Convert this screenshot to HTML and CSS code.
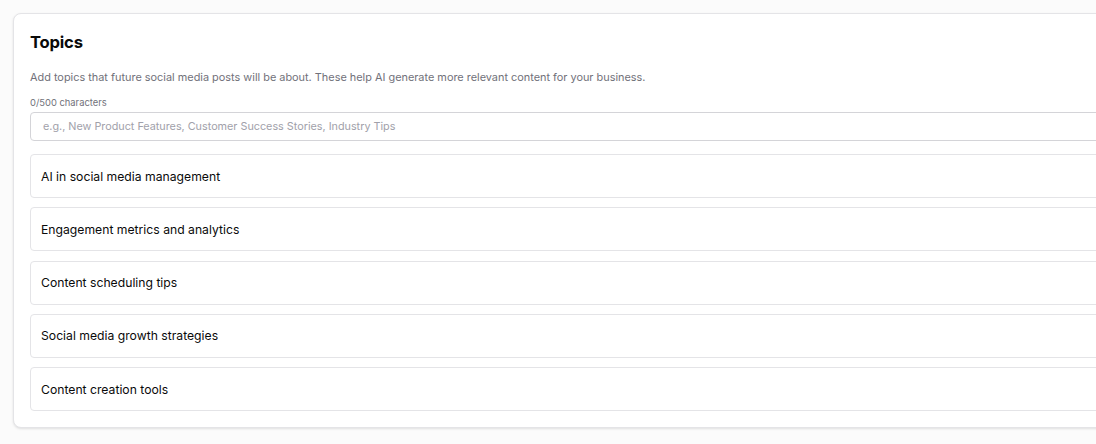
FILE: index.html
```html
<!DOCTYPE html>
<html lang="en">
<head>
  <meta charset="UTF-8" />
  <meta name="viewport" content="width=device-width, initial-scale=1.0" />
  <title>Topics</title>
  <link rel="stylesheet" href="styles.css">
</head>
<body>
  <section class="card">
    <h2 class="card-title">Topics</h2>
    <p class="card-desc">Add topics that future social media posts will be about. These help AI generate more relevant content for your business.</p>

    <div class="char-count">0/500 characters</div>
    <input type="text" class="topic-input" placeholder="e.g., New Product Features, Customer Success Stories, Industry Tips" />

    <!-- saved topics -->
    <ul class="topic-list">
      <li class="topic-item">AI in social media management</li>
      <li class="topic-item">Engagement metrics and analytics</li>
      <li class="topic-item">Content scheduling tips</li>
      <li class="topic-item">Social media growth strategies</li>
      <li class="topic-item">Content creation tools</li>
    </ul>
  </section>
</body>
</html>
```

FILE: styles.css
```css
html, body {
  margin: 0;
  padding: 0;
  overflow: hidden;
  height: 100vh;
}
body {
  font-family: Inter, "Noto Sans", Arial, sans-serif;
  background-color: #fbfbfb;
  color: #0a0a0a;
  padding: 13px 0 0 13px;
  box-sizing: border-box;
}

.card {
  width: 1200px;
  background-color: #fff;
  border: 1px solid #e4e4e7;
  border-radius: 8px;
  box-shadow: 0 1px 3px rgba(0, 0, 0, 0.08), 0 1px 2px rgba(0, 0, 0, 0.04);
  padding: 16px;
  box-sizing: border-box;
}

.card-title {
  margin: 0;
  font-size: 16.6px;
  font-weight: 700;
  line-height: 24px;
  letter-spacing: -0.2px;
}
.card-desc {
  margin: 15px 0 0;
  font-size: 10.9px;
  line-height: 16px;
  color: #71717a;
}

.char-count {
  margin-top: 12px;
  font-size: 9.4px;
  line-height: 12px;
  color: #71717a;
}
.topic-input {
  display: block;
  width: 100%;
  height: 29px;
  margin-top: 3px;
  padding: 0 12px;
  border: 1px solid #d4d4d8;
  border-radius: 4px;
  font-family: inherit;
  font-size: 10.8px;
  color: #0a0a0a;
  box-sizing: border-box;
  outline: none;
}
.topic-input::placeholder {
  color: #a1a1aa;
}

.topic-list {
  list-style: none;
  margin: 13px 0 0;
  padding: 0;
  display: flex;
  flex-direction: column;
  gap: 9.3px;
}
.topic-item {
  height: 44px;
  display: flex;
  align-items: center;
  padding: 0 10px;
  border: 1px solid #e4e4e7;
  border-radius: 4px;
  font-size: 12.2px;
  box-sizing: border-box;
}
```
